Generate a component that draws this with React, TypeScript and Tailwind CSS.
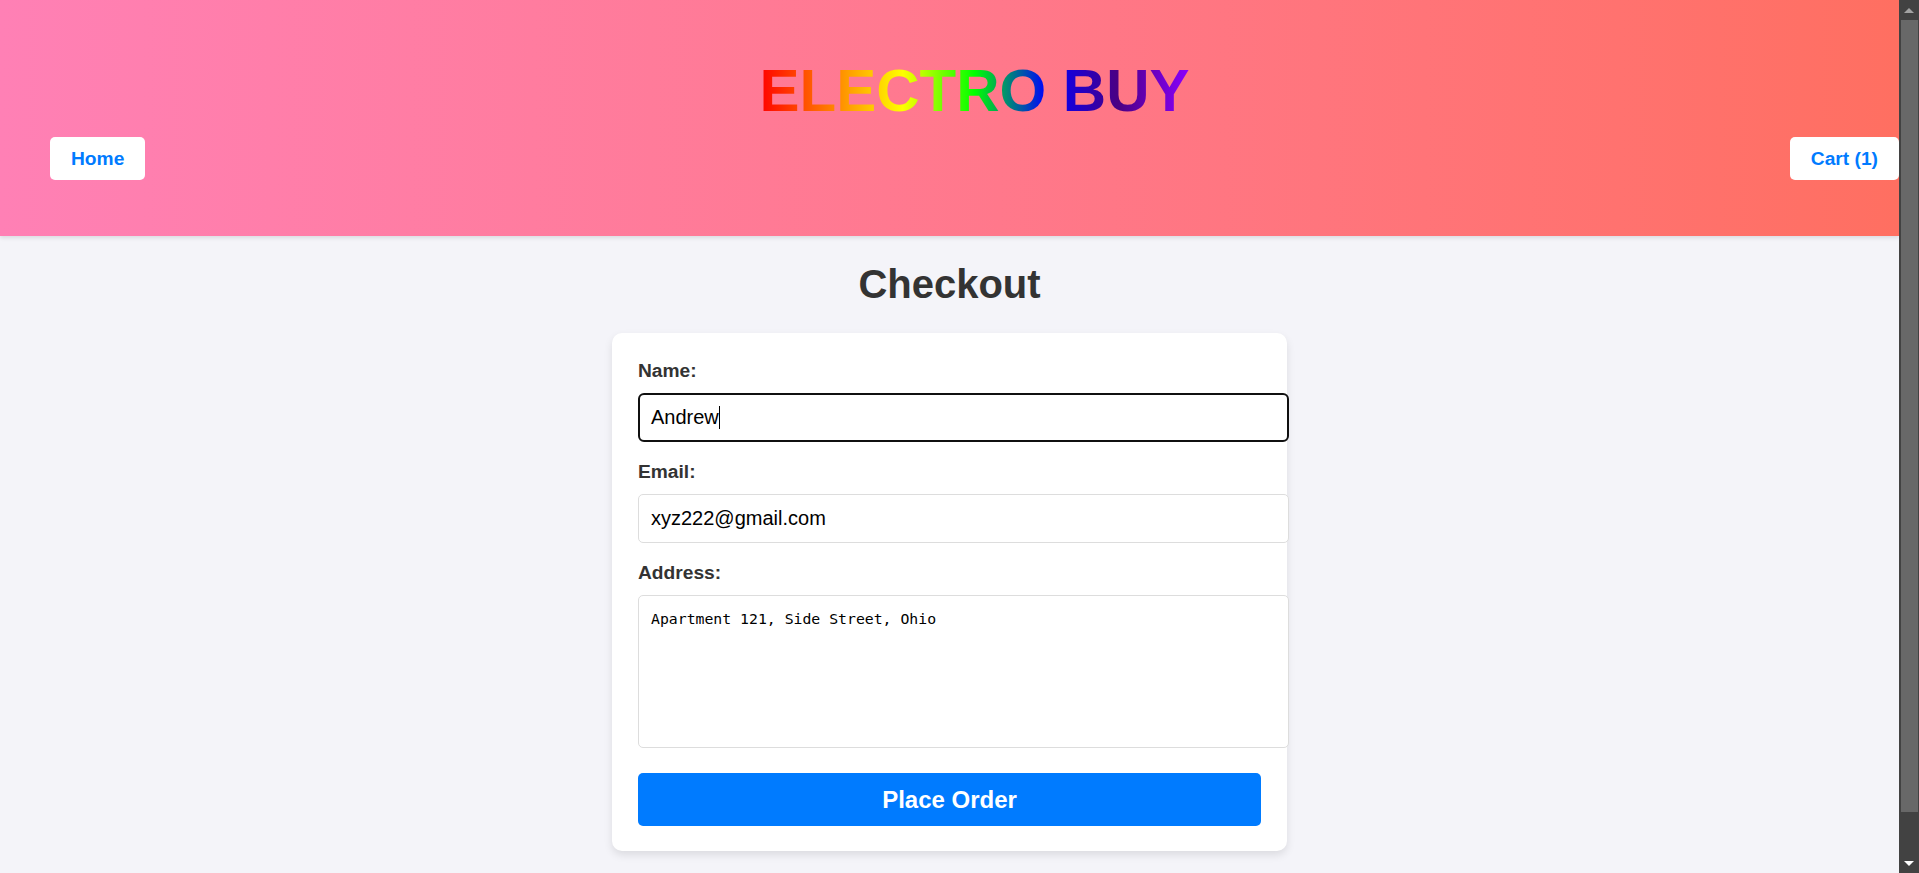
import { useState } from "react";

const NavButton = ({ label }: { label: string }) => (
  <a
    href="#"
    className="inline-block rounded-[5px] bg-white px-[21px] py-[10px] text-[1.2rem] leading-[23px] font-bold text-[#007bff] no-underline"
  >
    {label}
  </a>
);

// window scrollbar as it shows in the capture
const ScrollBar = () => (
  <div className="fixed top-0 right-0 flex h-screen w-[20px] flex-col items-center bg-[#424242]">
    <div className="flex h-[20px] items-center justify-center">
      <div className="h-0 w-0 border-x-[5px] border-b-[5px] border-x-transparent border-b-[#a3a3a3]" />
    </div>
    <div className="ml-[2px] h-[792px] w-[17px] self-start bg-[#686868]" />
    <div className="flex-1" />
    <div className="flex h-[20px] items-center justify-center">
      <div className="h-0 w-0 border-x-[5px] border-t-[5px] border-x-transparent border-t-white" />
    </div>
  </div>
);

const FieldLabel = ({ children }: { children: string }) => (
  <label className="mb-[11px] block pt-[2px] text-[1.2rem] leading-[22px] font-bold text-[#333]">
    {children}
  </label>
);

export default function App() {
  const [email, setEmail] = useState("xyz222@gmail.com");
  const [address, setAddress] = useState("Apartment 121, Side Street, Ohio");

  return (
    <div className="min-h-screen bg-[#f4f4f9] font-['Liberation_Sans',Arial,sans-serif] text-[#333]">
      <div className="mr-[20px]">
        <header className="bg-linear-to-r from-[#ff80b5] to-[#ff6f61] pt-[56px] pb-[56px] pl-[50px] shadow-[0_2px_4px_rgba(0,0,0,0.1)]">
          <div className="flex justify-center">
            <h1 className="inline-block bg-[linear-gradient(to_right,#ff0000,#ff7f00,#ffff00,#00ff00,#0000ff,#4b0082,#8b00ff)] bg-clip-text text-[60px] leading-[69px] font-bold text-transparent">
              ELECTRO BUY
            </h1>
          </div>
          <nav className="mt-[12px] flex items-center justify-between">
            <NavButton label="Home" />
            <NavButton label="Cart (1)" />
          </nav>
        </header>

        <main className="flex flex-col items-center pb-[75px]">
          <h2 className="mt-[25px] mb-[26px] text-[40px] leading-[46px] font-bold text-[#333]">
            Checkout
          </h2>

          <form
            className="w-[675px] rounded-[10px] bg-white px-[26px] pt-[25px] pb-[25px] shadow-[0_4px_8px_rgba(0,0,0,0.1)]"
            onSubmit={(e) => e.preventDefault()}
          >
            <FieldLabel>Name:</FieldLabel>
            {/* focused field, drawn with its caret */}
            <div className="mb-[17px] flex h-[49px] w-[651px] items-center rounded-[6px] border-2 border-[#101010] bg-white px-[11px] text-[20px] leading-[23px] text-black">
              <span>Andrew</span>
              <span className="inline-block h-[23px] w-px bg-black" />
            </div>

            <FieldLabel>Email:</FieldLabel>
            <input
              type="email"
              value={email}
              onChange={(e) => setEmail(e.target.value)}
              className="mb-[17px] box-border block h-[49px] w-[651px] rounded-[5px] border border-[#ddd] bg-white px-[12px] text-[20px] leading-[23px] text-black outline-none"
            />

            <FieldLabel>Address:</FieldLabel>
            <textarea
              value={address}
              onChange={(e) => setAddress(e.target.value)}
              className="box-border block h-[153px] w-[651px] resize-none rounded-[5px] border border-[#ddd] bg-white px-[12px] py-[12px] font-['DejaVu_Sans_Mono',monospace] text-[14.8px] text-black outline-none"
            />

            <button
              type="submit"
              className="mt-[25px] block h-[53px] w-full rounded-[5px] bg-[#007bff] text-[24px] font-bold text-white"
            >
              Place Order
            </button>
          </form>
        </main>
      </div>
      <ScrollBar />
    </div>
  );
}
